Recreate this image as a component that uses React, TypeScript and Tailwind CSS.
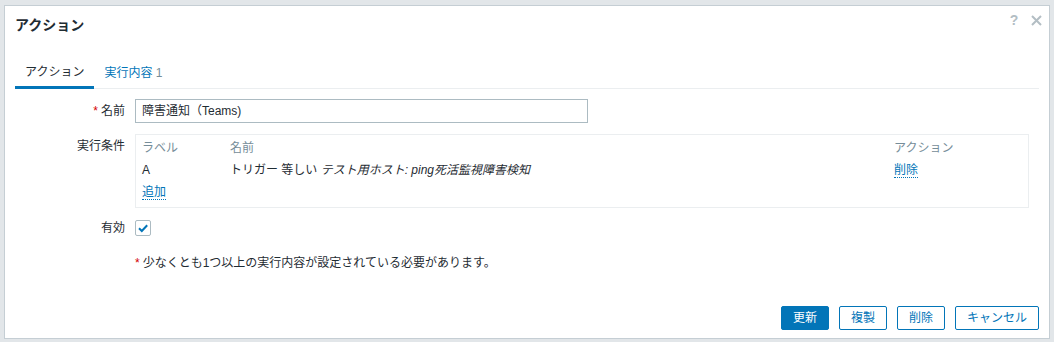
import React from "react";

export default function App() {
  return (
    <div className="w-[1054px] h-[342px] overflow-hidden bg-[#e2e6e9] pt-[5px] pl-[4px] font-['Liberation_Sans','Noto_Sans_CJK_JP',sans-serif] text-[12px] text-[#1f2c33]">
      <div className="w-[1046px] h-[334px] bg-white border border-[#c5ced4] flex flex-col px-[10px]">
        {/* header */}
        <div className="h-[51px] pt-[10px] flex items-start justify-between">
          <h4 className="text-[14px] leading-[18px] font-bold text-[#1f2c33]">アクション</h4>
          <div className="flex items-center -mr-[3px] mt-[-2px] gap-[12px] text-[#b3bec4]">
            <span className="w-[10px] text-center text-[14px] leading-[12px] font-bold">?</span>
            <svg width="11" height="11" viewBox="0 0 11 11">
              <path d="M1 1L10 10M10 1L1 10" stroke="#b3bec4" strokeWidth="2" />
            </svg>
          </div>
        </div>

        {/* tabs */}
        <div className="flex h-[32px] border-b border-[#ebeef0]">
          <div className="h-[32px] px-[10px] border-b-[3px] border-[#0275b8] flex items-center text-[#1f2c33]">
            アクション
          </div>
          <div className="h-[31px] px-[10px] flex items-center text-[#0275b8]">
            実行内容&nbsp;<span className="text-[#768d99]">1</span>
          </div>
        </div>

        {/* form */}
        <div className="mt-[10px] flex flex-col">
          <div className="grid grid-cols-[120px_1fr] h-[24px] items-center">
            <div className="text-right pr-[10px]">
              <span className="text-[#d40000] mr-[3px]">*</span>名前
            </div>
            <div className="w-[453px] h-[24px] border border-[#acbbc2] px-[6px] flex items-center">
              障害通知（Teams)
            </div>
          </div>

          <div className="grid grid-cols-[120px_1fr] mt-[11px]">
            <div className="text-right pr-[10px] pt-[3px] leading-[18px]">実行条件</div>
            <div className="w-[894px] border border-[#ebeef0] px-[6px] pt-[2px] pb-[4px]">
              <div className="grid grid-cols-[88px_1fr_128px] h-[22px] items-center text-[#768d99]">
                <span>ラベル</span>
                <span>名前</span>
                <span>アクション</span>
              </div>
              <div className="grid grid-cols-[88px_1fr_128px] h-[22px] items-center">
                <span>A</span>
                <span>
                  トリガー 等しい <i>テスト用ホスト: ping死活監視障害検知</i>
                </span>
                <span>
                  <span className="text-[#0275b8] border-b border-dotted border-[#0275b8] leading-[14px] inline-block">削除</span>
                </span>
              </div>
              <div className="h-[22px] flex items-center">
                <span className="text-[#0275b8] border-b border-dotted border-[#0275b8] leading-[14px] inline-block">追加</span>
              </div>
            </div>
          </div>

          <div className="grid grid-cols-[120px_1fr] mt-[8px] h-[24px] items-center">
            <div className="text-right pr-[10px]">有効</div>
            <div className="w-[16px] h-[16px] border border-[#acbbc2] rounded-[2px] flex items-center justify-center -mt-[1px]">
              <svg width="12" height="12" viewBox="0 0 12 12">
                <path d="M2 6.2L4.8 9L10.2 3.2" fill="none" stroke="#0275b8" strokeWidth="2" />
              </svg>
            </div>
          </div>

          <div className="grid grid-cols-[120px_1fr] mt-[14px] h-[18px] items-center">
            <div />
            <div>
              <span className="text-[#d40000] mr-[3px]">*</span>少なくとも1つ以上の実行内容が設定されている必要があります。
            </div>
          </div>
        </div>

        {/* footer */}
        <div className="mt-auto pb-[8px] flex justify-end gap-[10px]">
          <button className="h-[24px] px-[11px] rounded-[2px] border border-[#0275b8] bg-[#0275b8] text-white">更新</button>
          <button className="h-[24px] px-[11px] rounded-[2px] border border-[#0275b8] bg-white text-[#0275b8]">複製</button>
          <button className="h-[24px] px-[11px] rounded-[2px] border border-[#0275b8] bg-white text-[#0275b8]">削除</button>
          <button className="h-[24px] px-[11px] rounded-[2px] border border-[#0275b8] bg-white text-[#0275b8]">キャンセル</button>
        </div>
      </div>
    </div>
  );
}
